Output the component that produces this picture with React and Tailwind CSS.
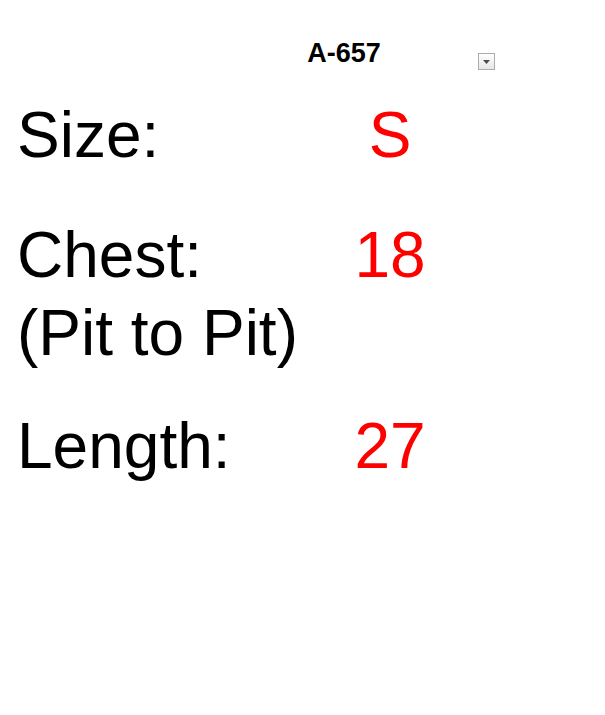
import React from "react";

const rows = [
  { label: ["Size:"], value: "S", gap: "mt-[26px]" },
  { label: ["Chest:", "(Pit to Pit)"], value: "18", gap: "mt-[42px]" },
  { label: ["Length:"], value: "27", gap: "mt-[35px]" },
];

const FilterButton = () => (
  <div className="mt-[15px] ml-[89px] w-[17px] h-[17px] border border-[#acacac] bg-gradient-to-b from-white to-[#e6e6e6] flex items-center justify-center">
    <svg width="7" height="4" viewBox="0 0 7 4">
      <path d="M0 0H7L3.5 4Z" fill="#4a4a4a" />
    </svg>
  </div>
);

export default function App() {
  return (
    <div className="w-[605px] h-[715px] bg-white text-black font-['Liberation_Sans',Arial,sans-serif]">
      {/* header cell */}
      <div className="flex items-start pt-[38px]">
        <div className="ml-[299px] w-[90px] text-center text-[27px] leading-[30px] font-bold">
          A-657
        </div>
        <FilterButton />
      </div>

      {/* measurement rows */}
      {rows.map((row) => (
        <div key={row.value} className={`${row.gap} grid grid-cols-[323px_100px] pl-[17px] text-[64px] leading-[78px]`}>
          <div>
            {row.label.map((l) => (
              <div key={l} className="whitespace-nowrap">{l}</div>
            ))}
          </div>
          <div className="text-center text-[#ff0000]">{row.value}</div>
        </div>
      ))}
    </div>
  );
}
